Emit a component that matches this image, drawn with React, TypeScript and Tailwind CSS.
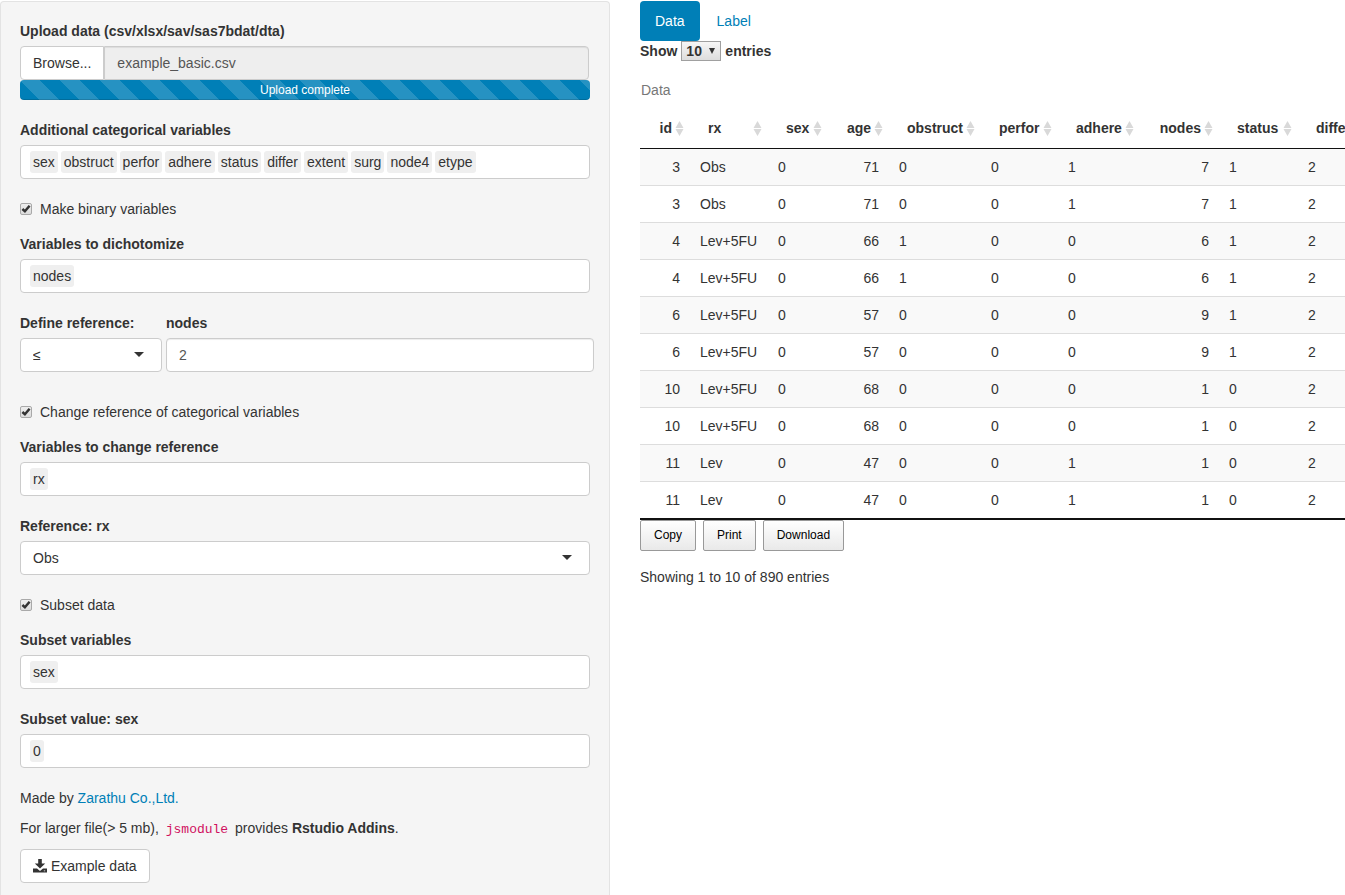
import { useState } from "react";
import type { ReactNode } from "react";

const columns = [
  { name: "id", width: "w-[50px]", right: true },
  { name: "rx", width: "w-[78px]", right: false },
  { name: "sex", width: "w-[60px]", right: false },
  { name: "age", width: "w-[61px]", right: true },
  { name: "obstruct", width: "w-[92px]", right: false },
  { name: "perfor", width: "w-[77px]", right: false },
  { name: "adhere", width: "w-[82px]", right: false },
  { name: "nodes", width: "w-[79px]", right: true },
  { name: "status", width: "w-[79px]", right: false },
  { name: "differ", width: "w-[75px]", right: false },
];

const rows = [
  ["3", "Obs", "0", "71", "0", "0", "1", "7", "1", "2"],
  ["3", "Obs", "0", "71", "0", "0", "1", "7", "1", "2"],
  ["4", "Lev+5FU", "0", "66", "1", "0", "0", "6", "1", "2"],
  ["4", "Lev+5FU", "0", "66", "1", "0", "0", "6", "1", "2"],
  ["6", "Lev+5FU", "0", "57", "0", "0", "0", "9", "1", "2"],
  ["6", "Lev+5FU", "0", "57", "0", "0", "0", "9", "1", "2"],
  ["10", "Lev+5FU", "0", "68", "0", "0", "0", "1", "0", "2"],
  ["10", "Lev+5FU", "0", "68", "0", "0", "0", "1", "0", "2"],
  ["11", "Lev", "0", "47", "0", "0", "1", "1", "0", "2"],
  ["11", "Lev", "0", "47", "0", "0", "1", "1", "0", "2"],
];

function Field({ id, label, children }: { id: string; label: string; children: ReactNode }) {
  return (
    <div className="flex min-w-0 flex-col gap-[5px]">
      <label htmlFor={id} className="font-bold">
        {label}
      </label>
      {children}
    </div>
  );
}

function TagInput({ id, label, items }: { id: string; label: string; items: string[] }) {
  return (
    <Field id={id} label={label}>
      <div className="flex h-[34px] items-center gap-[3px] rounded border border-[#cccccc] bg-white px-[9px]">
        {items.map((item) => (
          <span key={item} className="rounded-[3px] bg-[#efefef] px-[3px] py-px">
            {item}
          </span>
        ))}
        <input id={id} type="text" className="w-0 min-w-0 flex-1 outline-none" />
      </div>
    </Field>
  );
}

function SelectInput({ id, label, options }: { id: string; label: string; options: string[] }) {
  return (
    <Field id={id} label={label}>
      <div className="relative">
        <select
          id={id}
          className="block h-[34px] w-full appearance-none rounded border border-[#cccccc] bg-white px-3 outline-none"
        >
          {options.map((o) => (
            <option key={o}>{o}</option>
          ))}
        </select>
        <svg
          viewBox="0 0 10 5"
          className="pointer-events-none absolute top-[14px] right-[18px] h-[5px] w-[10px] fill-[#333333]"
          aria-hidden="true"
        >
          <path d="M0 0h10L5 5z" />
        </svg>
      </div>
    </Field>
  );
}

function CheckInput({ label }: { label: string }) {
  const [checked, setChecked] = useState(true);
  return (
    <label className="flex items-center gap-2">
      <span className="relative size-3">
        <input
          type="checkbox"
          checked={checked}
          onChange={(e) => setChecked(e.target.checked)}
          className="block size-3 appearance-none rounded-[2px] border border-[#a9a9a9] bg-linear-to-b from-[#eeeeee] to-[#dcdcdc]"
        />
        {checked && (
          <svg
            viewBox="0 0 12 12"
            className="pointer-events-none absolute inset-0 size-3"
            aria-hidden="true"
          >
            <path d="M2.4 6 4.9 8.3 9.6 2.8" fill="none" stroke="#333333" strokeWidth="2.5" />
          </svg>
        )}
      </span>
      {label}
    </label>
  );
}

function SortIcon() {
  return (
    <svg
      viewBox="0 0 9 15"
      className="absolute top-[13px] right-[6px] h-[15px] w-[9px] fill-[#d9d9d9]"
      aria-hidden="true"
    >
      <path d="M4.5 0 8.5 7h-8zM.5 8h8l-4 7z" />
    </svg>
  );
}

function Sidebar() {
  return (
    <form
      onSubmit={(e) => e.preventDefault()}
      className="mt-px flex flex-col gap-5 rounded-t border border-b-0 border-[#e3e3e3] bg-[#f5f5f5] px-[19px] pt-[19px] pb-3"
    >
      <Field id="file" label="Upload data (csv/xlsx/sav/sas7bdat/dta)">
        <div>
          <div className="mr-px flex h-[34px]">
            <button type="button" className="rounded-l border border-[#cccccc] bg-white px-3">
              Browse...
            </button>
            <input
              id="file"
              type="text"
              readOnly
              value="example_basic.csv"
              className="min-w-0 flex-1 rounded-r border border-[#cccccc] bg-[#eeeeee] px-3 text-[#555555] shadow-[inset_0_1px_1px_rgba(0,0,0,0.075)] outline-none"
            />
          </div>
          <div className="h-5 rounded bg-[#007fb7] bg-[linear-gradient(45deg,rgba(255,255,255,0.15)_25%,transparent_25%,transparent_50%,rgba(255,255,255,0.15)_50%,rgba(255,255,255,0.15)_75%,transparent_75%,transparent)] bg-[length:40px_40px] text-center text-xs leading-5 text-white shadow-[inset_0_-1px_0_rgba(0,0,0,0.15)]">
            Upload complete
          </div>
        </div>
      </Field>

      <TagInput
        id="factors"
        label="Additional categorical variables"
        items={["sex", "obstruct", "perfor", "adhere", "status", "differ", "extent", "surg", "node4", "etype"]}
      />

      <div className="flex flex-col gap-[15px]">
        <CheckInput label="Make binary variables" />
        <TagInput id="binary" label="Variables to dichotomize" items={["nodes"]} />
      </div>

      <div className="-mr-1 mb-[10px] grid grid-cols-[142fr_428fr] gap-1">
        <SelectInput id="operator" label="Define reference:" options={["≤", "<", "≥", ">"]} />
        <Field id="cut" label="nodes">
          <input
            id="cut"
            type="text"
            inputMode="numeric"
            defaultValue="2"
            className="h-[34px] w-full rounded border border-[#cccccc] bg-white px-3 text-[#555555] shadow-[inset_0_1px_1px_rgba(0,0,0,0.075)] outline-none"
          />
        </Field>
      </div>

      <div className="flex flex-col gap-[15px]">
        <CheckInput label="Change reference of categorical variables" />
        <TagInput id="reference-vars" label="Variables to change reference" items={["rx"]} />
      </div>

      <SelectInput id="reference" label="Reference: rx" options={["Obs", "Lev", "Lev+5FU"]} />

      <div className="flex flex-col gap-[15px]">
        <CheckInput label="Subset data" />
        <TagInput id="subset-vars" label="Subset variables" items={["sex"]} />
      </div>

      <TagInput id="subset-value" label="Subset value: sex" items={["0"]} />

      <div className="flex flex-col items-start gap-[10px]">
        <p>
          Made by{" "}
          <a href="#zarathu" className="text-[#007fb7]">
            Zarathu Co.,Ltd.
          </a>
        </p>
        <p>
          For larger file(&gt; 5 mb),{" "}
          <code className="px-[3px] font-['Liberation_Mono',monospace] text-[13px] leading-4 text-[#d01060]">
            jsmodule
          </code>{" "}
          provides <strong>Rstudio Addins</strong>.
        </p>
        <button
          type="button"
          className="mt-px flex h-[34px] items-center gap-1 rounded border border-[#cccccc] bg-white px-3"
        >
          <svg viewBox="0 0 14 14" className="size-[14px] fill-[#333333]" aria-hidden="true">
            <path d="M5.2 0h3.6v4.5h3.4L7 9.6 1.8 4.5h3.4z" />
            <path
              d="M0 9.4h4L7 12l3-2.6h4V13.6H0zM10.8 11.4v.9h1.4v-.9z"
              fillRule="evenodd"
            />
          </svg>
          Example data
        </button>
      </div>
    </form>
  );
}

function DataTable() {
  return (
    <div className="overflow-hidden border-b-2 border-[#111111]">
      <table className="w-[733px] table-fixed border-separate border-spacing-0">
        <caption className="py-2 pl-px text-left text-[#777777]">Data</caption>
        <thead>
          <tr>
            {columns.map((c) => (
              <th
                key={c.name}
                scope="col"
                className={`relative border-b border-[#111111] px-[18px] py-[10px] font-bold ${c.width} ${
                  c.right ? "text-right" : "text-left"
                }`}
              >
                {c.name}
                <SortIcon />
              </th>
            ))}
          </tr>
        </thead>
        <tbody>
          {rows.map((row, r) => (
            <tr key={r} className="group odd:bg-[#f9f9f9]">
              {row.map((cell, i) => (
                <td
                  key={i}
                  className={`border-t border-[#dddddd] px-[10px] py-2 group-first:border-t-0 ${
                    columns[i].right ? "text-right" : "text-left"
                  }`}
                >
                  {cell}
                </td>
              ))}
            </tr>
          ))}
        </tbody>
      </table>
    </div>
  );
}

export default function App() {
  return (
    <div className="grid min-h-screen grid-cols-[minmax(0,610fr)_minmax(0,705fr)] gap-[30px] bg-white font-['Liberation_Sans',Arial,sans-serif] text-sm leading-5 text-[#333333]">
      <Sidebar />
      <main className="pt-px">
        <nav className="flex gap-0.5">
          <a href="#data" className="rounded bg-[#007fb7] px-[15px] py-[10px] text-white">
            Data
          </a>
          <a href="#label" className="rounded px-[15px] py-[10px] text-[#007fb7]">
            Label
          </a>
        </nav>
        <div className="mb-[11px] flex h-5 items-center gap-1 font-bold">
          <label htmlFor="length">Show</label>
          <div className="relative">
            <select
              id="length"
              className="block h-5 w-10 appearance-none border border-[#a0a0a0] bg-linear-to-b from-[#f6f6f6] to-[#dddddd] px-1 leading-[18px] font-bold outline-none"
            >
              <option>10</option>
              <option>25</option>
              <option>50</option>
              <option>100</option>
            </select>
            <svg
              viewBox="0 0 6 6"
              className="pointer-events-none absolute top-[7px] right-[6px] size-[6px] fill-[#333333]"
              aria-hidden="true"
            >
              <path d="M0 0h6L3 6z" />
            </svg>
          </div>
          <span>entries</span>
        </div>
        <DataTable />
        <div className="flex gap-[7px]">
          {["Copy", "Print", "Download"].map((name) => (
            <button
              key={name}
              type="button"
              className="h-[31px] rounded-[2px] border border-[#999999] bg-linear-to-b from-white to-[#e9e9e9] px-[13px] pb-0.5 text-xs text-black"
            >
              {name}
            </button>
          ))}
        </div>
        <p className="mt-4">Showing 1 to 10 of 890 entries</p>
      </main>
    </div>
  );
}
